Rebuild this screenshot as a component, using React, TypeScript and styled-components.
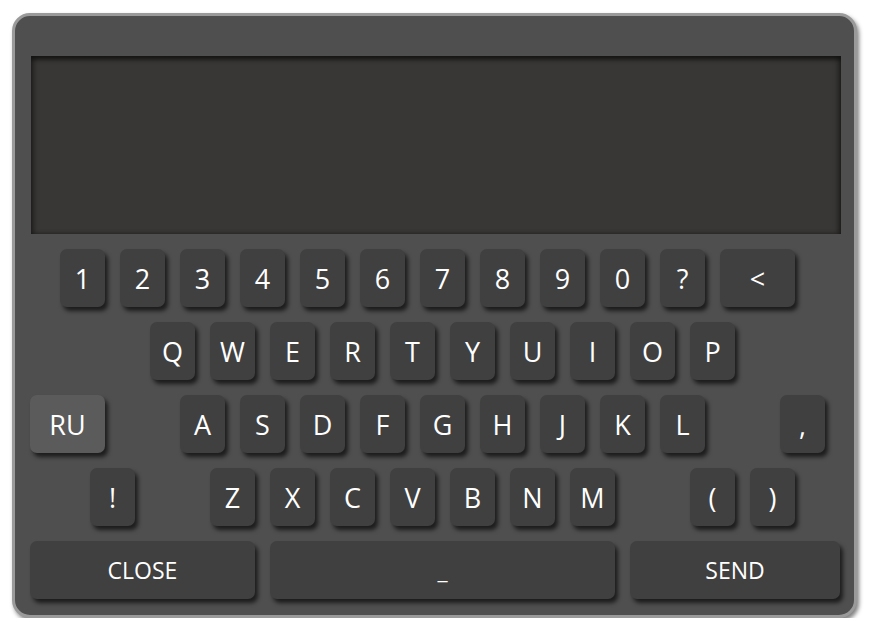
import React from "react";
import styled, { createGlobalStyle } from "styled-components";

const GlobalStyle = createGlobalStyle`
  html, body {
    margin: 0;
    padding: 0;
    background: #ffffff;
  }
  body {
    font-family: "Comic Sans MS", "Open Sans", sans-serif;
  }
`;

type KeyDef = {
  label: string;
  col: number;
  span?: number;
  variant?: "lang" | "wide";
};

const digits = ["1", "2", "3", "4", "5", "6", "7", "8", "9", "0", "?"];
const row2 = ["Q", "W", "E", "R", "T", "Y", "U", "I", "O", "P"];
const row3 = ["A", "S", "D", "F", "G", "H", "J", "K", "L"];
const row4 = ["Z", "X", "C", "V", "B", "N", "M"];

// columns are 15px cells, a normal key spans 3 of them
const rows: KeyDef[][] = [
  [
    ...digits.map((label, i) => ({ label, col: 3 + i * 4 })),
    { label: "<", col: 47, span: 5 },
  ],
  row2.map((label, i) => ({ label, col: 9 + i * 4 })),
  [
    { label: "RU", col: 1, span: 5, variant: "lang" },
    ...row3.map((label, i) => ({ label, col: 11 + i * 4 })),
    { label: ",", col: 51 },
  ],
  [
    { label: "!", col: 5 },
    ...row4.map((label, i) => ({ label, col: 13 + i * 4 })),
    { label: "(", col: 45 },
    { label: ")", col: 49 },
  ],
  [
    { label: "CLOSE", col: 1, span: 15, variant: "wide" },
    { label: "_", col: 17, span: 23, variant: "wide" },
    { label: "SEND", col: 41, span: 14, variant: "wide" },
  ],
];

export default function App() {
  return (
    <>
      <GlobalStyle />
      <Page>
        <Panel>
          <Display />
          <Keys>
            {rows.map((row, r) => (
              <Row key={r}>
                {row.map((k) => (
                  <Key
                    key={k.label}
                    $col={k.col}
                    $span={k.span ?? 3}
                    $variant={k.variant}
                  >
                    {k.label}
                  </Key>
                ))}
              </Row>
            ))}
          </Keys>
        </Panel>
      </Page>
    </>
  );
}

const Page = styled.div`
  padding: 13px 0 0 12px;
`;

const Panel = styled.div`
  width: 811px;
  box-sizing: content-box;
  padding: 40px 13px 16px 15px;
  background: #4f4f4f;
  border: 3px solid #9a9a9a;
  border-radius: 18px;
  box-shadow: 2px 3px 4px rgba(0, 0, 0, 0.5);
  display: flex;
  flex-direction: column;
  gap: 15px;
`;

const Display = styled.div`
  height: 178px;
  margin-left: 1px;
  background: #383735;
  box-shadow: inset 0 4px 4px rgba(0, 0, 0, 0.5),
    inset 4px 0 4px rgba(0, 0, 0, 0.25), inset -4px 0 4px rgba(0, 0, 0, 0.25);
`;

const Keys = styled.div`
  display: flex;
  flex-direction: column;
  gap: 15px;
`;

const Row = styled.div`
  display: grid;
  grid-template-columns: repeat(54, 15px);
  height: 58px;
`;

const Key = styled.div<{ $col: number; $span: number; $variant?: "lang" | "wide" }>`
  grid-column: ${(p) => p.$col} / span ${(p) => p.$span};
  display: flex;
  align-items: center;
  justify-content: center;
  background: ${(p) => (p.$variant === "lang" ? "#5b5b5b" : "#404040")};
  color: #ffffff;
  border-radius: 7px;
  box-shadow: 3px 4px 4px rgba(0, 0, 0, 0.65);
  font-size: ${(p) => (p.$variant === "wide" ? "23px" : "27px")};
  line-height: 1;
  user-select: none;
`;
